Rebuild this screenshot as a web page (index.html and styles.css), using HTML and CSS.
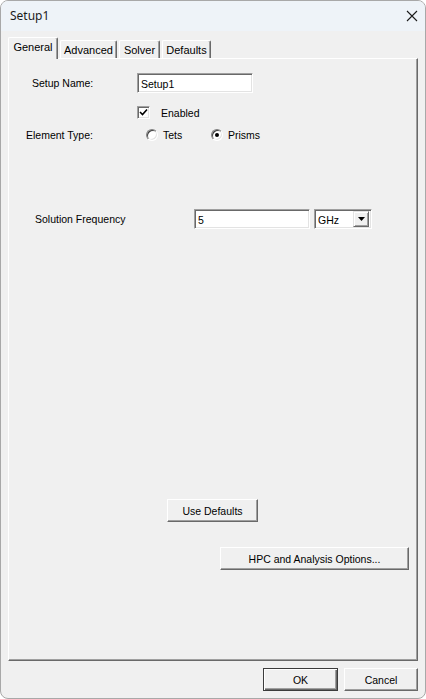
FILE: index.html
```html
<!DOCTYPE html>
<html>
<head>
<meta charset="utf-8">
<link rel="stylesheet" href="styles.css">
</head>
<body>
<div class="window">
  <div class="titlebar">
    <span class="title">Setup1</span>
    <svg class="close" width="12" height="12" viewBox="0 0 12 12"><path d="M1 1 L11 11 M11 1 L1 11" stroke="#1b1b1b" stroke-width="1.1" fill="none"/></svg>
  </div>
  <div class="content">
    <div class="tabs">
      <div class="tab tab-active tab-general">General</div>
      <div class="tab tab-advanced">Advanced</div>
      <div class="tab tab-solver">Solver</div>
      <div class="tab tab-defaults">Defaults</div>
    </div>
    <div class="panel">
      <div class="row row-name">
        <span class="label label-name">Setup Name:</span>
        <div class="textbox textbox-name">Setup1</div>
      </div>
      <div class="row row-enabled">
        <div class="checkbox">
          <svg width="9" height="9" viewBox="0 0 9 9"><path d="M1 4 L3.5 6.5 L8 1.5" stroke="#000" stroke-width="1.6" fill="none"/></svg>
        </div>
        <span class="check-label">Enabled</span>
      </div>
      <div class="row row-type">
        <span class="label label-type">Element Type:</span>
        <div class="radio"></div>
        <span class="radio-label radio-label-tets">Tets</span>
        <div class="radio radio-on"><span class="dot"></span></div>
        <span class="radio-label">Prisms</span>
      </div>
      <div class="row row-freq">
        <span class="label label-freq">Solution Frequency</span>
        <div class="textbox textbox-freq">5</div>
        <div class="combo">
          <span class="combo-text">GHz</span>
          <div class="combo-btn">
            <svg width="7" height="4" viewBox="0 0 7 4"><path d="M0 0 H7 L3.5 4 Z" fill="#000"/></svg>
          </div>
        </div>
      </div>
      <div class="row row-defaults">
        <div class="button btn-defaults">Use Defaults</div>
      </div>
      <div class="row row-hpc">
        <div class="button btn-hpc">HPC and Analysis Options...</div>
      </div>
    </div>
    <div class="footer">
      <div class="button btn-ok">OK</div>
      <div class="button btn-cancel">Cancel</div>
    </div>
  </div>
</div>
</body>
</html>
```

FILE: styles.css
```css
* { box-sizing: border-box; }
html, body { margin: 0; padding: 0; background: #ffffff; }
body {
  font-family: "Liberation Sans", Arial, sans-serif;
  font-size: 10.5px;
  color: #000;
}
.window {
  width: 426px;
  height: 699px;
  border: 1px solid #a8a8a8;
  border-radius: 8px;
  background: #f0f0f0;
  overflow: hidden;
  display: flex;
  flex-direction: column;
}
.titlebar {
  height: 30px;
  background: #eef3f8;
  display: flex;
  align-items: center;
  justify-content: space-between;
  padding: 0 9px 0 9px;
  flex: none;
}
.title {
  font-family: "Noto Sans", sans-serif;
  font-size: 12px;
  color: #1b1b1b;
  margin-top: -1px;
}
.close { margin-right: -2px; margin-top: -1px; }
.content {
  padding: 6px 7px 0 7px;
  display: flex;
  flex-direction: column;
}
.tabs {
  display: flex;
  align-items: flex-end;
  height: 21px;
  gap: 2px;
  position: relative;
  z-index: 2;
  font-size: 11px;
}
.tab {
  height: 18px;
  background: #f0f0f0;
  border-top: 1px solid #fff;
  border-left: 1px solid #fff;
  border-right: 1px solid #696969;
  box-shadow: inset -1px 0 #a0a0a0;
  border-radius: 2px 2px 0 0;
  display: flex;
  align-items: center;
  justify-content: center;
  padding-top: 1px;
  flex: none;
}
.tab-active {
  height: 22px;
  margin-bottom: -1px;
  padding-top: 0;
  padding-bottom: 3px;
}
.tab-general { width: 50px; }
.tab-advanced { width: 57px; }
.tab-solver { width: 41px; }
.tab-defaults { width: 49px; }
.panel {
  position: relative;
  z-index: 1;
  height: 603px;
  border-top: 1px solid #fff;
  border-left: 1px solid #fff;
  border-right: 1px solid #696969;
  border-bottom: 1px solid #696969;
  box-shadow: inset -1px -1px #a0a0a0;
  display: flex;
  flex-direction: column;
}
.row { display: flex; align-items: center; }
.label { flex: none; }
.row-name { margin-top: 14px; height: 20px; padding-left: 23px; }
.label-name { width: 105px; }
.textbox {
  background: #fff;
  border-top: 1px solid #a0a0a0;
  border-left: 1px solid #a0a0a0;
  border-right: 1px solid #fff;
  border-bottom: 1px solid #fff;
  box-shadow: inset 1px 1px #696969, inset -1px -1px #e3e3e3;
  height: 20px;
  padding: 2px 0 0 3px;
  display: flex;
  align-items: center;
}
.textbox-name { width: 116px; }
.row-enabled { margin-top: 13px; height: 13px; padding-left: 128px; }
.checkbox {
  width: 13px;
  height: 13px;
  background: #fff;
  border-top: 1px solid #a0a0a0;
  border-left: 1px solid #a0a0a0;
  border-right: 1px solid #fff;
  border-bottom: 1px solid #fff;
  box-shadow: inset 1px 1px #696969, inset -1px -1px #e3e3e3;
  display: flex;
  align-items: center;
  justify-content: center;
  flex: none;
}
.check-label { margin-left: 11px; }
.row-type { margin-top: 9px; height: 14px; padding-left: 17px; }
.label-type { width: 120px; }
.radio {
  width: 12px;
  height: 12px;
  border-radius: 50%;
  background: #fff;
  border: 1px solid;
  border-color: #808080 #ffffff #ffffff #808080;
  box-shadow: inset 1px 1px #404040, inset -1px -1px #e3e3e3;
  display: flex;
  align-items: center;
  justify-content: center;
  flex: none;
}
.dot { width: 4px; height: 4px; border-radius: 50%; background: #000; }
.radio-label { margin-left: 5px; }
.radio-label-tets { width: 48px; }
.row-freq { margin-top: 67px; height: 20px; padding-left: 26px; }
.label-freq { width: 159px; }
.textbox-freq { width: 116px; }
.combo {
  margin-left: 4px;
  width: 58px;
  height: 20px;
  background: #fff;
  border-top: 1px solid #a0a0a0;
  border-left: 1px solid #a0a0a0;
  border-right: 1px solid #fff;
  border-bottom: 1px solid #fff;
  box-shadow: inset 1px 1px #696969, inset -1px -1px #e3e3e3;
  display: flex;
  align-items: center;
  justify-content: space-between;
  padding: 2px 2px 2px 3px;
}
.combo-text { padding-top: 1px; }
.combo-btn {
  width: 16px;
  height: 16px;
  background: #f0f0f0;
  border-top: 1px solid #e3e3e3;
  border-left: 1px solid #e3e3e3;
  border-right: 1px solid #696969;
  border-bottom: 1px solid #696969;
  box-shadow: inset 1px 1px #fff, inset -1px -1px #a0a0a0;
  display: flex;
  align-items: center;
  justify-content: center;
}
.button {
  background: #f0f0f0;
  border-top: 1px solid #fff;
  border-left: 1px solid #fff;
  border-right: 1px solid #696969;
  border-bottom: 1px solid #696969;
  box-shadow: inset -1px -1px #a0a0a0;
  height: 23px;
  display: flex;
  align-items: center;
  justify-content: center;
  flex: none;
}
.row-defaults { margin-top: 270px; padding-left: 158px; }
.btn-defaults { width: 91px; }
.row-hpc { margin-top: 25px; padding-left: 211px; }
.btn-hpc { width: 189px; }
.footer {
  display: flex;
  justify-content: flex-end;
  gap: 6px;
  margin-top: 7px;
}
.btn-ok {
  width: 75px;
  border: 1px solid #3c3c3c;
  box-shadow: inset 1px 1px #fff, inset -1px -1px #696969, inset -2px -2px #a0a0a0;
}
.btn-cancel { width: 74px; }
```
